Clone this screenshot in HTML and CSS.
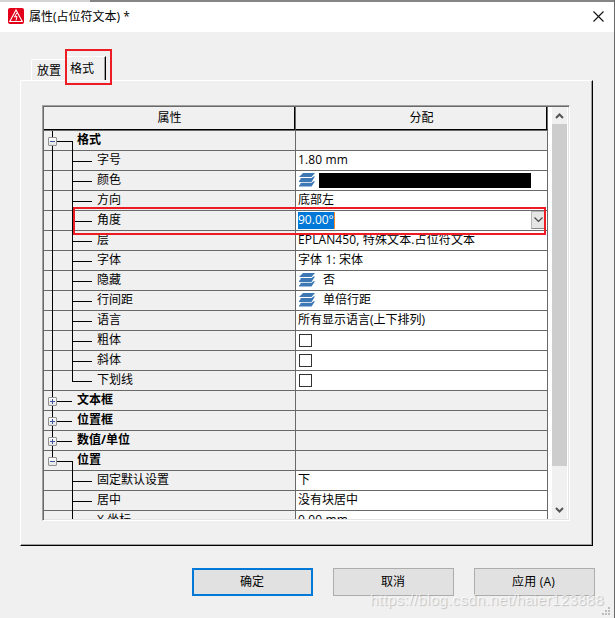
FILE: index.html
```
<!DOCTYPE html>
<html lang="zh-CN">
<head>
<meta charset="utf-8">
<title>属性(占位符文本) *</title>
<link rel="stylesheet" href="styles.css">
</head>
<body>
<svg width="0" height="0" class="defs">
  <symbol id="layers" viewBox="0 0 16 14">
    <path d="M4 0h12l-3.500 4H0zM1.500 5h11l2-1.500H16L12.500 9H0V8l1.500-1.500zM1.500 9.700h11l2-1.500H16L12.500 13.500H0v-1l1.500-1.500z" fill="#3d78b5"/>
  </symbol>
</svg>
<div class="window">
  <div class="backdrop"></div>
  <header class="titlebar">
    <svg class="logo" width="16" height="16" viewBox="0 0 16 16"><rect width="16" height="16" rx="2" fill="#e2001a"/><path d="M8 2L1.800 13.500h12.400z" fill="none" stroke="#fff" stroke-width="1.100"/><path d="M8.800 5L6.500 9l2.500-.6L8 12.500" fill="none" stroke="#fff"/></svg>
    <h1>属性(占位符文本) *</h1>
    <svg class="close" width="11" height="11" viewBox="0 0 11 11"><path d="M.5.500l10 10M10.500.500l-10 10" stroke="#111" stroke-width="1.100"/></svg>
  </header>
  <nav class="tabs"><div class="tab">放置</div><div class="tab active">格式<i class="mark-tab"></i></div></nav>
  <main class="panel">
    <div class="list">
      <div class="grid">
        <div class="row head"><div class="name">属性</div><div class="value">分配</div></div>
        <div class="row group open first"><div class="name"><i class="box"></i>格式</div><div class="value"></div></div>
        <div class="row"><div class="name">字号</div><div class="value latin">1.80 mm</div></div>
        <div class="row"><div class="name">颜色</div><div class="value"><svg class="layers"><use href="#layers"/></svg><span class="swatch"></span></div></div>
        <div class="row"><div class="name">方向</div><div class="value">底部左</div></div>
        <div class="row edit"><div class="name">角度</div><div class="value"><span class="selected">90.00°</span><span class="drop"><svg width="9" height="6" viewBox="0 0 9 6"><path d="M.5.500l4 4 4-4" fill="none" stroke="#444" stroke-width="1.100"/></svg></span></div><i class="mark-row"></i></div>
        <div class="row"><div class="name">层</div><div class="value latin">EPLAN450, 特殊文本.占位符文本</div></div>
        <div class="row"><div class="name">字体</div><div class="value latin">字体 1: 宋体</div></div>
        <div class="row"><div class="name">隐藏</div><div class="value"><svg class="layers"><use href="#layers"/></svg><span class="after">否</span></div></div>
        <div class="row"><div class="name">行间距</div><div class="value"><svg class="layers"><use href="#layers"/></svg><span class="after">单倍行距</span></div></div>
        <div class="row"><div class="name">语言</div><div class="value">所有显示语言(上下排列)</div></div>
        <div class="row"><div class="name">粗体</div><div class="value"><span class="check"></span></div></div>
        <div class="row"><div class="name">斜体</div><div class="value"><span class="check"></span></div></div>
        <div class="row end"><div class="name">下划线</div><div class="value"><span class="check"></span></div></div>
        <div class="row group"><div class="name"><i class="box plus"></i>文本框</div><div class="value"></div></div>
        <div class="row group"><div class="name"><i class="box plus"></i>位置框</div><div class="value"></div></div>
        <div class="row group"><div class="name"><i class="box plus"></i>数值/单位</div><div class="value"></div></div>
        <div class="row group open last"><div class="name"><i class="box"></i>位置</div><div class="value"></div></div>
        <div class="row tail"><div class="name">固定默认设置</div><div class="value">下</div></div>
        <div class="row tail"><div class="name">居中</div><div class="value">没有块居中</div></div>
        <div class="row tail"><div class="name">X 坐标</div><div class="value latin">0.00 mm</div></div>
      </div>
      <div class="scroll">
        <svg width="9" height="6" viewBox="0 0 9 6"><path d="M1 5l3.500-3.500L8 5" fill="none" stroke="#555" stroke-width="2"/></svg>
        <div class="thumb"></div>
        <svg width="9" height="6" viewBox="0 0 9 6"><path d="M1 1l3.500 3.500L8 1" fill="none" stroke="#555" stroke-width="2"/></svg>
      </div>
    </div>
  </main>
  <footer class="buttons"><button class="ok">确定</button><button>取消</button><button class="apply">应用 (A)</button></footer>
  <div class="watermark">https://blog.csdn.net/haier123888</div>
  <svg class="grip" width="8" height="8" viewBox="0 0 8 8"><path d="M6 0h2v2H6zM3 3h2v2H3zM6 3h2v2H6zM0 6h2v2H0zM3 6h2v2H3zM6 6h2v2H6z" fill="#bdbdbd"/></svg>
</div>
</body>
</html>
```
FILE: styles.css
```
* { box-sizing: border-box; }
body { margin: 0; background: #f0f0f0; color: #000; font: 12px/19px "Open Sans", "Noto Sans CJK SC", sans-serif; }
.defs { position: absolute; }
.window { position: relative; width: 615px; height: 618px; overflow: hidden; border-right: 1px solid #696969; }
.backdrop { height: 2px; background: linear-gradient(90deg, #d4d4d4 90px, #858585 90px); }
.titlebar { display: flex; align-items: center; height: 30px; padding: 0 10px 2px 8px; background: #fff; }
.titlebar h1 { flex: 1; margin: 0 0 0 5px; font-size: 12px; font-weight: 400; }

.tabs { display: flex; align-items: flex-end; height: 48px; padding-left: 31px; }
.tab { width: 34px; height: 21px; padding-left: 5px; line-height: 22px; border: 1px solid #fff; border-width: 1px 0 0 1px; border-radius: 2px 0 0; white-space: nowrap; }
.tab.active { position: relative; width: 41px; height: 24px; padding-left: 4px; line-height: 24px; border-right: 1px solid #000; box-shadow: inset -1px 0 #a0a0a0; }
.mark-tab { position: absolute; left: -1px; top: -8px; width: 47px; height: 36px; border: 2px solid #ed1c24; }

.panel { width: 573px; height: 466px; margin-left: 20px; padding: 24px 0 0 21px; border: 1px solid #fff; border-right-color: #000; border-bottom-color: #000; box-shadow: inset -1px -1px #a0a0a0; }
.list { display: flex; width: 528px; height: 416px; border: 1px solid #a0a0a0; border-right-color: #fff; border-bottom-color: #fff; background: #fff; box-shadow: inset 1px 1px #696969, inset -1px -1px #e3e3e3; padding: 1px 2px 1px 1px; }
.grid { width: 504px; height: 412px; overflow: hidden; }
.row { position: relative; display: grid; grid-template-columns: 252px 252px; height: 20px; border-bottom: 1px solid #696969; }
.name, .value { position: relative; display: flex; align-items: center; height: 19px; padding-bottom: 2px; border-right: 1px solid #696969; line-height: 17px; white-space: nowrap; }
.name { padding-left: 53px; background: #f0f0f0; }
.value { padding-left: 2px; }
.latin { letter-spacing: .12px; }
.head { height: 24px; background: #f0f0f0; }
.head .name, .head .value { justify-content: center; height: 23px; padding: 0 0 1px; border-bottom: 1px solid #000; box-shadow: inset -1px 0 #000; }
.group .name { padding-left: 33px; font-weight: 700; }
.group .value { background: #f0f0f0; }

.row:not(.head) .name::before { content: ""; position: absolute; left: 8px; top: 0; width: 21px; height: 20px; background: linear-gradient(#000, #000) 0 0 / 1px 20px no-repeat, linear-gradient(#000, #000) 20px 0 / 1px 20px no-repeat; z-index: 1; }
.row:not(.head) .name::after { content: ""; position: absolute; left: 28px; top: 10px; width: 20px; height: 1px; background: #000; z-index: 1; }
.row.group .name::before { background-size: 1px 20px, 0 0; }
.row.group .name::after { left: 8px; }
.row.open .name::before { background: linear-gradient(#000, #000) 0 0 / 1px 20px no-repeat, linear-gradient(#000, #000) 20px 10px / 1px 10px no-repeat; }
.row.last .name::before { background-size: 1px 10px, 1px 10px; }
.row.end .name::before { background-size: 1px 20px, 1px 10px; }
.row.tail .name::before { background-size: 0 0, 1px 20px; }
.box { position: absolute; left: 4px; top: 6px; z-index: 2; width: 9px; height: 9px; border: 1px solid #919191; border-radius: 1px; background: linear-gradient(#3c55a0, #3c55a0) center / 5px 1px no-repeat, linear-gradient(#fff, #e4e4e4); }
.plus { background: linear-gradient(#3c55a0, #3c55a0) center / 5px 1px no-repeat, linear-gradient(#3c55a0, #3c55a0) center / 1px 5px no-repeat, linear-gradient(#fff, #e4e4e4); }

.layers { width: 16px; height: 14px; margin: 1px 0 0 1px; }
.swatch { width: 212px; height: 15px; margin: 2px 0 0 4px; background: #000; }
.after { margin-left: 8px; }
.check { width: 13px; height: 13px; margin: 2px 0 0 1px; border: 1px solid #333; background: #fff; }
.selected { height: 17px; width: 37px; margin-top: 1px; line-height: 16px; background: #0078d7; color: #fff; border-right: 1px solid #ff8728; }
.drop { display: flex; align-items: center; justify-content: center; width: 14px; height: 18px; margin: 1px 2px 0 auto; border: 1px solid #b5b5b5; border-bottom-color: #888; background: #e5e5e5; }
.mark-row { position: absolute; z-index: 3; left: 29px; top: -4px; width: 473px; height: 28px; border: 2px solid #ed1c24; }

.scroll { display: flex; flex-direction: column; align-items: center; width: 15px; height: 412px; margin-left: 4px; padding: 6px 0; background: #f0f0f0; }
.thumb { width: 15px; height: 342px; margin: 5px 0 auto; background: #cdcdcd; }

.buttons { display: flex; gap: 20px; padding: 22px 0 0 192px; }
.buttons button { width: 121px; height: 28px; padding: 0 1px 2px 0; border: 1px solid #adadad; background: #e1e1e1; color: #000; font: inherit; }
.buttons .ok { border: 2px solid #0078d7; }
.buttons .apply { padding-right: 2px; letter-spacing: .2px; }
.watermark { position: absolute; left: 370px; top: 590px; font: 15px/20px "Liberation Sans", sans-serif; letter-spacing: .37px; white-space: nowrap; color: rgba(255, 255, 255, .65); text-shadow: 1px 1px 1px rgba(0, 0, 0, .2); }
.grip { position: absolute; left: 602px; top: 607px; }
```
